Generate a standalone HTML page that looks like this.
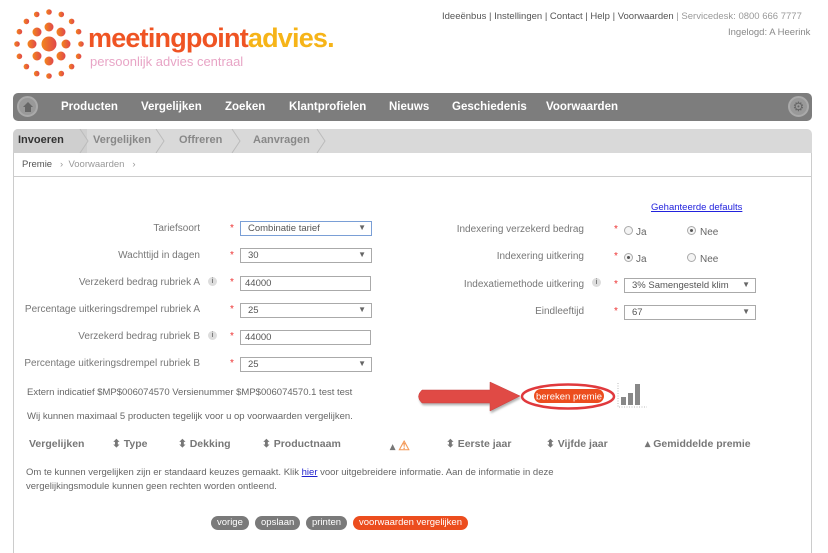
<!DOCTYPE html>
<html><head><meta charset="utf-8"><style>
*{box-sizing:border-box;margin:0;padding:0}
body{width:828px;height:551px;background:#fff;font-family:"Liberation Sans",sans-serif;color:#666;position:relative;overflow:hidden;font-size:10px}
.a{position:absolute;white-space:nowrap}
.nav{left:13px;top:93px;width:799px;height:28px;background:#7d7d7d;border-radius:5px}
.nav span{position:absolute;top:8px;color:#fff;font-weight:bold;font-size:11.5px}
.tabs{left:13px;top:129px;width:799px;height:24px;background:#d9d9d9;border-radius:5px 5px 0 0}
.tabs span{position:absolute;top:5px;font-weight:bold;font-size:11px;color:#888}
.box{left:13px;top:153px;width:799px;height:400px;border-left:1px solid #ccc;border-right:1px solid #ccc}
.lbl{font-size:10px;color:#777;text-align:right}
.st{color:#e33;font-size:10px}
.inp{height:15px;border:1px solid #aaa;background:#fff;font-size:9.5px;color:#555;padding:1px 0 0 7px}
.inp b{position:absolute;right:5px;top:1px;font-size:8px;color:#666}
.info{width:9px;height:9px;border-radius:50%;background:#ddd;color:#777;font-size:7px;text-align:center;line-height:9px;font-weight:bold}
.rad{width:9px;height:9px;border-radius:50%;border:1px solid #aaa;background:#f4f4f4}
.rad.on::after{content:"";position:absolute;left:2px;top:2px;width:3px;height:3px;border-radius:50%;background:#555}
.th{font-weight:bold;font-size:10.5px;color:#777;top:438px}
.btn{top:516px;height:14px;border-radius:7px;color:#fff;font-size:9.5px;padding:1px 6px 0;background:#7a7a7a}
</style></head><body>
<svg class="a" style="left:0;top:0" width="100" height="90">
<defs><linearGradient id="g" x1="0" x2="1"><stop offset="0" stop-color="#f3861c"/><stop offset="1" stop-color="#e0474c"/></linearGradient></defs>
<g fill="url(#g)">
<circle cx="49" cy="44" r="7.5"/>
<circle cx="66" cy="44" r="4.5"/><circle cx="61" cy="56" r="4.5"/><circle cx="49" cy="61" r="4.5"/><circle cx="37" cy="56" r="4.5"/><circle cx="32" cy="44" r="4.5"/><circle cx="37" cy="32" r="4.5"/><circle cx="49" cy="27" r="4.5"/><circle cx="61" cy="32" r="4.5"/>
<circle cx="81" cy="44" r="2.8"/><circle cx="78.6" cy="56.3" r="2.8"/><circle cx="71.6" cy="66.6" r="2.8"/><circle cx="61.3" cy="73.6" r="2.8"/><circle cx="49" cy="76" r="2.8"/><circle cx="36.7" cy="73.6" r="2.8"/><circle cx="26.4" cy="66.6" r="2.8"/><circle cx="19.4" cy="56.3" r="2.8"/><circle cx="17" cy="44" r="2.8"/><circle cx="19.4" cy="31.7" r="2.8"/><circle cx="26.4" cy="21.4" r="2.8"/><circle cx="36.7" cy="14.4" r="2.8"/><circle cx="49" cy="12" r="2.8"/><circle cx="61.3" cy="14.4" r="2.8"/><circle cx="71.6" cy="21.4" r="2.8"/><circle cx="78.6" cy="31.7" r="2.8"/>
</g></svg>
<div class="a" style="left:88px;top:23px;font-size:27px;font-weight:bold;letter-spacing:-0.8px;color:#ef5423">meetingpoint<span style="color:#f6b418">advies.</span></div>
<div class="a" style="left:90px;top:54px;font-size:13px;color:#e8a5c6">persoonlijk advies centraal</div>
<div class="a" style="left:442px;top:11px;font-size:9.5px;color:#555">Ideeënbus | Instellingen | Contact | Help | Voorwaarden <span style="color:#999">| Servicedesk: 0800 666 7777</span></div>
<div class="a" style="left:728px;top:27px;font-size:9.5px;color:#888">Ingelogd: A Heerink</div>
<div class="a nav">
<div class="a" style="left:4px;top:3px;width:21px;height:21px;border-radius:50%;background:#999;border:2px solid #aaa"><div class="a" style="left:4px;top:4px;width:0;height:0;border:5px solid transparent;border-bottom:5px solid #666;border-top:0"></div><div class="a" style="left:6px;top:9px;width:6px;height:5px;background:#666"></div></div>
<span style="left:48px">Producten</span><span style="left:128px">Vergelijken</span><span style="left:212px">Zoeken</span><span style="left:276px">Klantprofielen</span><span style="left:376px">Nieuws</span><span style="left:439px">Geschiedenis</span><span style="left:533px">Voorwaarden</span>
<div class="a" style="left:775px;top:3px;width:21px;height:21px;border-radius:50%;background:#999;border:2px solid #aaa;color:#666;font-size:13px;text-align:center;line-height:17px">⚙</div>
</div>
<div class="a tabs">
<div class="a" style="left:0;top:0;width:74px;height:24px;background:#cfcfcf;border-radius:5px 0 0 0"></div>
<span style="left:5px;color:#333">Invoeren</span><span style="left:80px">Vergelijken</span><span style="left:166px">Offreren</span><span style="left:240px">Aanvragen</span>
<svg class="a" style="left:0;top:0" width="330" height="24"><g fill="none" stroke="#bbb"><path d="M67 0l8 12-8 12M143 0l8 12-8 12M219 0l8 12-8 12M304 0l8 12-8 12"/></g></svg>
</div>
<div class="a box"></div>
<div class="a" style="left:14px;top:176px;width:797px;height:1px;background:#ccc"></div>
<div class="a" style="left:22px;top:159px;font-size:9.5px;color:#555">Premie &nbsp;&nbsp;<span style="color:#999">› &nbsp;Voorwaarden &nbsp;&nbsp;›</span></div>

<div class="a lbl" style="right:628px;top:223px">Tariefsoort</div>
<div class="a lbl" style="right:628px;top:250px">Wachttijd in dagen</div>
<div class="a lbl" style="right:628px;top:277px">Verzekerd bedrag rubriek A</div>
<div class="a lbl" style="right:628px;top:304px">Percentage uitkeringsdrempel rubriek A</div>
<div class="a lbl" style="right:628px;top:331px">Verzekerd bedrag rubriek B</div>
<div class="a lbl" style="right:628px;top:358px">Percentage uitkeringsdrempel rubriek B</div>
<div class="a info" style="left:208px;top:277px">i</div><div class="a info" style="left:208px;top:331px">i</div>
<div class="a st" style="left:230px;top:223px">*</div><div class="a st" style="left:230px;top:250px">*</div><div class="a st" style="left:230px;top:277px">*</div><div class="a st" style="left:230px;top:304px">*</div><div class="a st" style="left:230px;top:331px">*</div><div class="a st" style="left:230px;top:358px">*</div>
<div class="a inp" style="left:240px;top:221px;width:132px;border-color:#7a9fd6">Combinatie tarief<b>▼</b></div>
<div class="a inp" style="left:240px;top:248px;width:132px">30<b>▼</b></div>
<div class="a inp" style="left:240px;top:276px;width:131px;padding-left:4px">44000</div>
<div class="a inp" style="left:240px;top:303px;width:132px">25<b>▼</b></div>
<div class="a inp" style="left:240px;top:330px;width:131px;padding-left:4px">44000</div>
<div class="a inp" style="left:240px;top:357px;width:132px">25<b>▼</b></div>

<div class="a" style="left:651px;top:202px;font-size:9.5px;color:#2222dd;text-decoration:underline">Gehanteerde defaults</div>
<div class="a lbl" style="right:244px;top:224px">Indexering verzekerd bedrag</div>
<div class="a lbl" style="right:244px;top:251px">Indexering uitkering</div>
<div class="a lbl" style="right:244px;top:279px">Indexatiemethode uitkering</div>
<div class="a lbl" style="right:244px;top:306px">Eindleeftijd</div>
<div class="a info" style="left:592px;top:278px">i</div>
<div class="a st" style="left:614px;top:224px">*</div><div class="a st" style="left:614px;top:251px">*</div><div class="a st" style="left:614px;top:279px">*</div><div class="a st" style="left:614px;top:306px">*</div>
<div class="a rad" style="left:624px;top:226px"></div><div class="a" style="left:636px;top:227px;font-size:10px">Ja</div>
<div class="a rad on" style="left:687px;top:226px"></div><div class="a" style="left:700px;top:227px;font-size:10px">Nee</div>
<div class="a rad on" style="left:624px;top:253px"></div><div class="a" style="left:636px;top:254px;font-size:10px">Ja</div>
<div class="a rad" style="left:687px;top:253px"></div><div class="a" style="left:700px;top:254px;font-size:10px">Nee</div>
<div class="a inp" style="left:624px;top:278px;width:132px">3% Samengesteld klim<b>▼</b></div>
<div class="a inp" style="left:624px;top:305px;width:132px">67<b>▼</b></div>

<div class="a" style="left:27px;top:387px;font-size:9.5px">Extern indicatief $MP$006074570 Versienummer $MP$006074570.1 test test</div>
<div class="a" style="left:27px;top:411px;font-size:9.5px">Wij kunnen maximaal 5 producten tegelijk voor u op voorwaarden vergelijken.</div>

<svg class="a" style="left:410px;top:378px" width="250" height="40">
<path d="M12 12 H80 V4 L110 18 L80 33 V25 H12 Q5 18.5 12 12Z" fill="#e04a45" stroke="#c84040" stroke-width="0.5" style="filter:drop-shadow(1px 2px 1px rgba(0,0,0,.3))"/>
<ellipse cx="158" cy="18.5" rx="46" ry="12" fill="none" stroke="#e0393d" stroke-width="2.5"/>
<rect x="124" y="11" width="70" height="14" rx="7" fill="#ec4d1e"/>
<text x="159" y="21.5" fill="#fff" font-size="9.5" font-family="Liberation Sans" text-anchor="middle">bereken premie</text>
<g fill="#888"><rect x="211" y="19" width="5" height="8"/><rect x="218" y="15" width="5" height="12"/><rect x="225" y="6" width="5" height="21"/></g>
<path d="M208 5V29H237" fill="none" stroke="#bbb" stroke-dasharray="1 1.5"/>
</svg>

<div class="a th" style="left:29px">Vergelijken</div>
<div class="a th" style="left:112px">⬍ Type</div>
<div class="a th" style="left:178px">⬍ Dekking</div>
<div class="a th" style="left:262px">⬍ Productnaam</div>
<div class="a th" style="left:390px">▴ <span style="color:#f39a5a;font-size:13px">⚠</span></div>
<div class="a th" style="left:446px">⬍ Eerste jaar</div>
<div class="a th" style="left:546px">⬍ Vijfde jaar</div>
<div class="a th" style="left:645px">▴ Gemiddelde premie</div>

<div class="a" style="left:26px;top:466px;font-size:9.5px;line-height:14px">Om te kunnen vergelijken zijn er standaard keuzes gemaakt. Klik <span style="color:#22c;text-decoration:underline">hier</span> voor uitgebreidere informatie. Aan de informatie in deze<br>vergelijkingsmodule kunnen geen rechten worden ontleend.</div>

<div class="a btn" style="left:211px">vorige</div>
<div class="a btn" style="left:255px">opslaan</div>
<div class="a btn" style="left:306px">printen</div>
<div class="a btn" style="left:353px;background:#ec4d1e">voorwaarden vergelijken</div>
</body></html>
